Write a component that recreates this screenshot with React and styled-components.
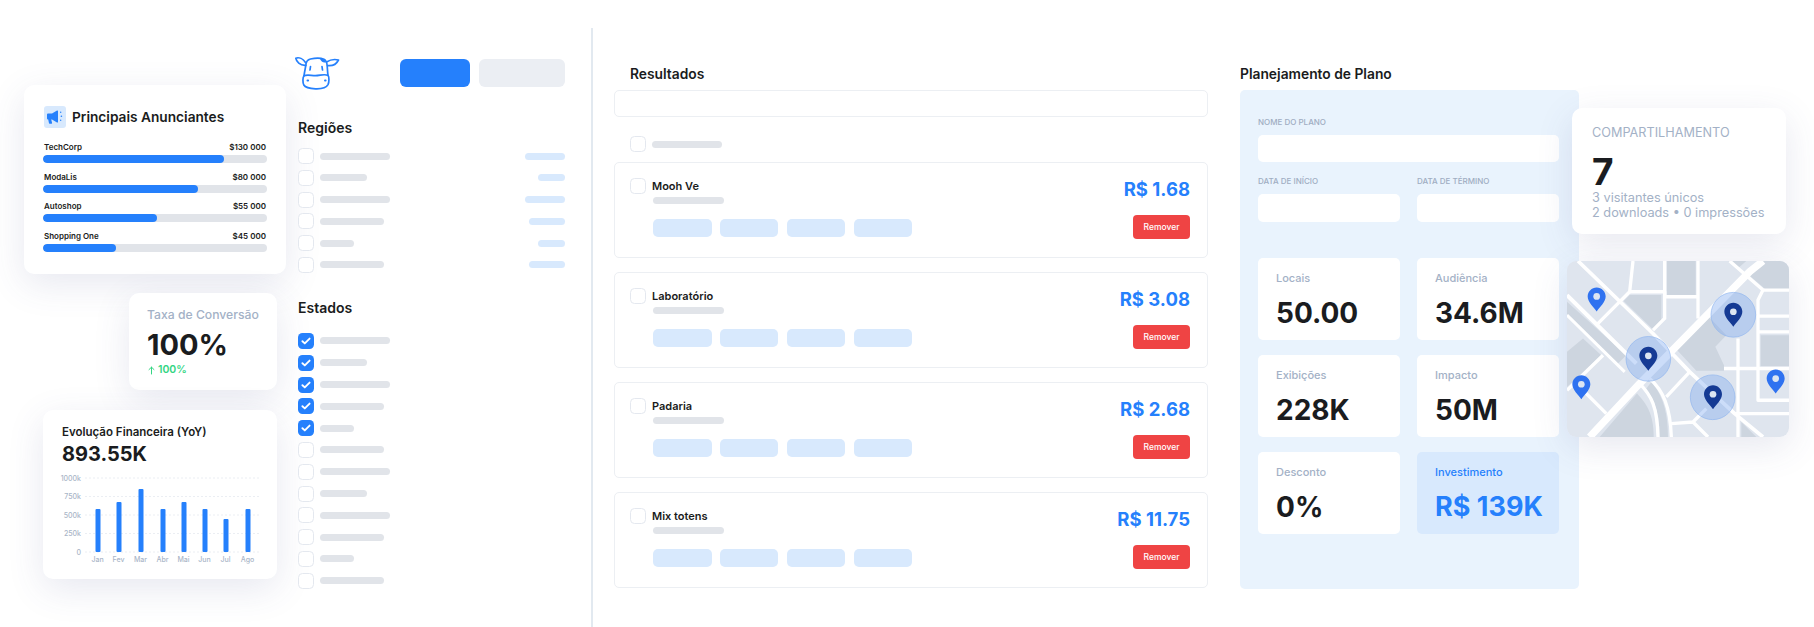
import React from "react";
import styled, { createGlobalStyle } from "styled-components";

const BLUE = "#2580FC";
const INK = "#1A1C20";
const MUTED = "#A3B1C6";
const BAR = "#E1E4E9";
const SOFT = "#D8E9FD";
const SHADOW = "0 10px 36px rgba(70, 80, 140, 0.13)";

const Global = createGlobalStyle`
  html, body { margin: 0; padding: 0; background: #fff; }
  body { font-family: Inter, "Liberation Sans", sans-serif; color: ${INK}; }
  * { box-sizing: border-box; }
`;

const Page = styled.div`
  display: flex;
  align-items: flex-start;
  width: 1814px;
  height: 627px;
  overflow: hidden;
  background: #fff;
`;

/* left: floating metric cards */
const LeftColumn = styled.div`
  display: flex;
  flex-direction: column;
  align-items: flex-end;
  width: 286px;
  padding-top: 85px;
  flex: none;
`;
const FloatCard = styled.section`
  background: #fff;
  border-radius: 10px;
  box-shadow: ${SHADOW};
`;
const AdvertisersCard = styled(FloatCard)`
  width: 262px;
  height: 189px;
  padding: 21px 19px 0 19px;
`;
const CardHead = styled.div`
  display: flex;
  align-items: center;
  gap: 6px;
  height: 22px;
  margin: 0 0 13px 1px;
`;
const IconBox = styled.span`
  display: flex;
  align-items: center;
  justify-content: center;
  width: 22px;
  height: 22px;
  border-radius: 3px;
  background: ${SOFT};
`;
const CardTitle = styled.h2`
  margin: 0;
  font-size: 13.7px;
  font-weight: 600;
  line-height: 20px;
  white-space: nowrap;
`;
const AdRow = styled.div`
  height: 29.5px;
`;
const AdLabels = styled.div`
  display: flex;
  justify-content: space-between;
  height: 12px;
  margin: 0 1px 2px 1px;
  font-size: 8px;
  font-weight: 600;
  line-height: 12px;
`;
const Track = styled.div`
  height: 8px;
  border-radius: 4px;
  background: ${BAR};
  overflow: hidden;
`;
const Fill = styled.div`
  height: 100%;
  border-radius: 4px;
  background: ${BLUE};
`;
const ConversionCard = styled(FloatCard)`
  width: 148px;
  height: 97px;
  margin: 19px 9px 0 0;
  padding: 14px 18px 0;
`;
const ConversionLabel = styled.div`
  font-size: 12.2px;
  font-weight: 500;
  line-height: 16px;
  color: ${MUTED};
  white-space: nowrap;
`;
const ConversionValue = styled.div`
  font-size: 29px;
  font-weight: 700;
  line-height: 38px;
  margin-top: 3px;
`;
const Trend = styled.div`
  display: flex;
  align-items: center;
  gap: 2px;
  font-size: 10.5px;
  font-weight: 600;
  line-height: 14px;
  margin-top: -1px;
  color: #34D583;
`;
const ChartCard = styled(FloatCard)`
  width: 234px;
  height: 169px;
  margin: 20px 9px 0 0;
  padding: 14px 0 0 19px;
`;
const ChartTitle = styled.div`
  font-size: 11.5px;
  font-weight: 600;
  line-height: 16px;
  white-space: nowrap;
`;
const ChartValue = styled.div`
  font-size: 20px;
  font-weight: 700;
  line-height: 28px;
`;
const ChartSvg = styled.svg`
  display: block;
  margin: 3px 0 0 -19px;
`;
const AxisText = styled.text`
  font-family: Inter, "Liberation Sans", sans-serif;
  font-size: 7px;
  fill: #A9B5C7;
  font-weight: 500;
`;

/* filters */
const FilterColumn = styled.aside`
  width: 267px;
  margin-left: 12px;
  padding-top: 55px;
  flex: none;
`;
const FilterTop = styled.div`
  display: flex;
  align-items: center;
  justify-content: space-between;
  height: 36px;
  margin-left: -3px;
`;
const TopButtons = styled.div`
  display: flex;
  gap: 9px;
`;
const TopButton = styled.div`
  width: ${(p) => p.$w}px;
  height: 28px;
  border-radius: 6px;
  background: ${(p) => (p.$primary ? BLUE : "#EBEEF3")};
`;
const SectionTitle = styled.h3`
  margin: ${(p) => p.$top}px 0 ${(p) => p.$bottom}px;
  font-size: 14px;
  font-weight: 600;
  line-height: 18px;
`;
const CheckList = styled.div`
  display: flex;
  flex-direction: column;
  gap: 5.8px;
`;
const CheckRow = styled.div`
  display: flex;
  align-items: center;
  gap: 6px;
  height: 16px;
`;
const Box = styled.span`
  display: flex;
  align-items: center;
  justify-content: center;
  flex: none;
  width: 16px;
  height: 16px;
  border-radius: 4.5px;
  background: ${(p) => (p.$checked ? BLUE : "#fff")};
  border: ${(p) => (p.$checked ? "none" : "1.5px solid #E4E8EF")};
`;
const Skeleton = styled.span`
  display: block;
  flex: none;
  width: ${(p) => p.$w}px;
  height: 7px;
  border-radius: 4px;
  background: ${BAR};
`;
const SkeletonBlue = styled(Skeleton)`
  margin-left: auto;
  background: ${SOFT};
`;

const Divider = styled.div`
  flex: none;
  width: 2px;
  height: 599px;
  margin: 28px 0 0 26px;
  background: #E2E9F0;
`;

/* results */
const ResultsColumn = styled.main`
  flex: none;
  width: 594px;
  margin-left: 21px;
  padding-top: 65px;
`;
const ColumnTitle = styled.h3`
  margin: 0 0 7px;
  padding-left: ${(p) => p.$pad || 0}px;
  font-size: 13.8px;
  font-weight: 600;
  line-height: 18px;
`;
const SearchBox = styled.div`
  height: 27px;
  border: 1px solid #ECEFF3;
  border-radius: 5px;
`;
const SelectAll = styled.div`
  display: flex;
  align-items: center;
  gap: 6px;
  height: 16px;
  margin: 19px 0 10px 16px;
`;
const ResultList = styled.div`
  display: flex;
  flex-direction: column;
  gap: 14px;
`;
const ResultCard = styled.article`
  display: flex;
  justify-content: space-between;
  height: 96px;
  padding: 15px 17px 0 15px;
  border: 1px solid #ECEFF3;
  border-radius: 5px;
`;
const ResultMain = styled.div`
  display: flex;
  flex-direction: column;
`;
const ResultName = styled.div`
  display: flex;
  align-items: center;
  gap: 6px;
  height: 16px;
  font-size: 11px;
  font-weight: 600;
`;
const ResultBar = styled(Skeleton)`
  margin: 3px 0 0 23px;
`;
const Chips = styled.div`
  display: flex;
  gap: 8.4px;
  margin: 15px 0 0 23px;
`;
const Chip = styled.span`
  width: 58.5px;
  height: 18px;
  border-radius: 5px;
  background: ${SOFT};
`;
const ResultSide = styled.div`
  display: flex;
  flex-direction: column;
  align-items: flex-end;
`;
const Price = styled.div`
  margin-top: -3px;
  font-size: 18.5px;
  font-weight: 700;
  line-height: 28px;
  color: ${BLUE};
  white-space: nowrap;
`;
const RemoveButton = styled.button`
  width: 57px;
  height: 24px;
  margin-top: 12px;
  padding: 0;
  border: none;
  border-radius: 4px;
  background: #EF4444;
  color: #fff;
  font-family: inherit;
  font-size: 8.5px;
  font-weight: 500;
`;

/* plan */
const PlanColumn = styled.section`
  position: relative;
  flex: none;
  width: 339px;
  margin-left: 32px;
  padding-top: 65px;
`;
const PlanPanel = styled.div`
  height: 499px;
  padding: 27px 20px 0 18px;
  border-radius: 5px;
  background: #E9F3FD;
`;
const FieldLabel = styled.div`
  height: 10px;
  margin-bottom: ${(p) => p.$gap}px;
  font-size: 8px;
  font-weight: 500;
  line-height: 10px;
  color: #9FADC2;
  white-space: nowrap;
`;
const Input = styled.div`
  height: ${(p) => p.$h}px;
  border-radius: 5px;
  background: #fff;
`;
const TwoCols = styled.div`
  display: grid;
  grid-template-columns: 142px 142px;
  column-gap: 17px;
  margin-top: 14px;
`;
const StatGrid = styled.div`
  display: grid;
  grid-template-columns: 142px 142px;
  gap: 15px 17px;
  margin-top: 36px;
`;
const Stat = styled.div`
  height: 82px;
  padding: 13px 0 0 18px;
  border-radius: 5px;
  background: ${(p) => (p.$accent ? SOFT : "#fff")};
`;
const StatLabel = styled.div`
  font-size: 11px;
  font-weight: 500;
  line-height: 14px;
  color: ${(p) => (p.$accent ? BLUE : MUTED)};
`;
const StatValue = styled.div`
  margin-top: 11px;
  font-size: ${(p) => (p.$accent ? 27 : 28)}px;
  font-weight: 700;
  line-height: 34px;
  color: ${(p) => (p.$accent ? BLUE : INK)};
  white-space: nowrap;
`;
const ShareCard = styled(FloatCard)`
  position: absolute;
  left: 332px;
  top: 108px;
  width: 214px;
  height: 126px;
  padding: 17px 0 0 20px;
`;
const ShareTitle = styled.div`
  font-size: 12.7px;
  font-weight: 400;
  line-height: 16px;
  color: ${MUTED};
`;
const ShareValue = styled.div`
  margin: 16px 0 3px;
  font-size: 37px;
  font-weight: 700;
  line-height: 30px;
`;
const ShareText = styled.div`
  font-size: 12.75px;
  line-height: 15px;
  color: ${MUTED};
  white-space: nowrap;
`;
const MapCard = styled.div`
  position: absolute;
  left: 327px;
  top: 261px;
  width: 222px;
  height: 176px;
  border-radius: 9px;
  overflow: hidden;
  box-shadow: ${SHADOW};
`;

/* data */
const advertisers = [
  ["TechCorp", "$130 000", 181],
  ["ModaLis", "$80 000", 155],
  ["Autoshop", "$55 000", 114],
  ["Shopping One", "$45 000", 73],
];
const regionRows = [
  [70, 40],
  [47, 27],
  [70, 40],
  [64, 36],
  [34, 27],
  [64, 36],
];
const stateRows = [70, 47, 70, 64, 34, 64, 70, 47, 70, 64, 34, 64];
const results = [
  ["Mooh Ve", "R$ 1.68"],
  ["Laboratório", "R$ 3.08"],
  ["Padaria", "R$ 2.68"],
  ["Mix totens", "R$ 11.75"],
];
const stats = [
  ["Locais", "50.00"],
  ["Audiência", "34.6M"],
  ["Exibições", "228K"],
  ["Impacto", "50M"],
  ["Desconto", "0%"],
  ["Investimento", "R$ 139K", true],
];
const bars = [
  ["Jan", 98, 509],
  ["Fev", 119, 502],
  ["Mar", 141, 489],
  ["Abr", 163, 509],
  ["Mai", 184, 502],
  ["Jun", 205, 509],
  ["Jul", 226, 519],
  ["Ago", 248, 509],
];
const gridLines = [
  ["1000k", 478],
  ["750k", 496.5],
  ["500k", 515],
  ["250k", 533.5],
  ["0", 552],
];

/* drawings */
const CowLogo = () => (
  <svg width="46" height="36" viewBox="0 0 46 36" fill="none" stroke={BLUE} strokeWidth="1.7" strokeLinecap="round" strokeLinejoin="round">
    <path d="M10.5 7.5C8 3.8 4 2 .8 3.2 1.4 7 5 10.2 10 10.4" />
    <path d="M31.5 7C35 4.8 39.5 4 43.5 5 41.5 9 37.5 11.2 32.6 10.6" />
    <path d="M10.8 10.5C11 7 12.5 4.6 15.5 4 20 3 26 3 29 4.2 31.2 5.2 32 8 32.2 11 32.5 15 32.6 18 33 20.4" />
    <path d="M10.8 10.5C10.2 14 9.4 17.5 9 20.8" />
    <path d="M9 20.8C12 19.2 16 20.6 20.5 20.6 25 20.6 29.5 18.6 33 20.4 34.3 21.4 34.2 27 33 29.6 31 33.2 26 34 20.5 33.8 15 33.6 10.5 33 8.8 30 7.6 27.5 7.6 22.5 9 20.8Z" />
    <path d="M15.5 11.5L15 15M27 11.5L27.5 15" />
    <path d="M12.5 25.5h.6M30 25.5h.6" strokeWidth="2" />
    <path d="M25 4C27 3.4 30 4.4 31 7 29.4 8.2 26.6 7.4 25 4Z" fill={BLUE} stroke="none" />
  </svg>
);

const Megaphone = () => (
  <svg width="18" height="16" viewBox="0 0 18 16" fill={BLUE}>
    <path d="M1 5.4a1 1 0 0 1 1-1h4L11 1.6c.5-.3 1-.1 1 .5v10.8c0 .6-.5.8-1 .5L6 10.6H5.2l.9 3.4c.1.4-.2.8-.6.8H3.6c-.3 0-.6-.2-.6-.5L2.2 10.6H2a1 1 0 0 1-1-1Z" />
    <rect x="14" y="2.6" width="1.4" height="1.4" rx=".7" />
    <rect x="14.6" y="6.6" width="1.6" height="1.4" rx=".7" />
    <rect x="14" y="10.6" width="1.4" height="1.4" rx=".7" />
  </svg>
);

const CheckMark = () => (
  <svg width="10" height="8" viewBox="0 0 10 8" fill="none" stroke="#fff" strokeWidth="1.9" strokeLinecap="round" strokeLinejoin="round">
    <path d="M1.4 4.2 3.8 6.4 8.6 1.6" />
  </svg>
);

const ArrowUp = () => (
  <svg width="9" height="9" viewBox="0 0 9 9" fill="none" stroke="#34D583" strokeWidth="1" strokeLinecap="round" strokeLinejoin="round">
    <path d="M4.5 8V1.2M2 3.6l2.5-2.4L7 3.6" />
  </svg>
);

const FinanceChart = () => (
  <ChartSvg width="234" height="108" viewBox="43 471 234 108">
    {gridLines.map(([label, y]) => (
      <g key={label}>
        <line x1="85" x2="259" y1={y} y2={y} stroke="#E6EAF0" strokeWidth="0.8" strokeDasharray="2 2" />
        <AxisText x="81" y={y + 2.5} textAnchor="end">{label}</AxisText>
      </g>
    ))}
    {bars.map(([label, x, top]) => (
      <g key={label}>
        <rect x={x - 2.5} y={top} width="5" height={552 - top} rx="1" fill={BLUE} />
        <AxisText x={x - 0.5} y="562" textAnchor="middle">{label}</AxisText>
      </g>
    ))}
  </ChartSvg>
);

const pinPath = "M0 -27C-15 -27 -27 -15 -27 0C-27 16 -9 32 0 45C9 32 27 16 27 0C27 -15 15 -27 0 -27Z";
const Pin = ({ x, y, color }) => (
  <g transform={`translate(${x} ${y})`}>
    <path d={pinPath} fill={color} />
    <circle r="10" fill="#DCE5F2" />
  </g>
);
const Halo = ({ x, y }) => (
  <circle cx={x} cy={y} r="67" fill="rgba(120,165,240,0.38)" stroke="#8FB5EE" strokeWidth="2" />
);

const Road = ({ d, w = 10 }) => <path d={d} fill="none" stroke="#fff" strokeWidth={w} strokeLinejoin="round" />;

const CityMap = () => (
  <svg width="222" height="176" viewBox="52 63 666 527" preserveAspectRatio="none" style={{ display: "block" }}>
    <rect x="52" y="63" width="666" height="527" fill="#DFE5EE" />
    <g fill="#CDD5DF">
      <path d="M352 63H438V165H352Z" />
      <path d="M597 105L640 63H718V150H650Z" />
      <path d="M222 183L240 165H335V240L310 268Z" />
      <path d="M375 322L472 225L530 285L497 320L523 375V392H440Z" />
      <path d="M52 185V225L205 370L230 345Z" />
      <path d="M52 335L100 295L155 345L52 440Z" />
      <path d="M150 590L262 460C290 490 312 520 312 590Z" />
      <path d="M633 285H718V378H633Z" />
      <path d="M575 545L620 590H575Z" />
      <path d="M330 590C330 530 320 490 290 445L305 425C345 470 355 530 355 590Z" />
      <path d="M540 63H590L565 85Z" />
    </g>
    <Road d="M85 63L310 280L420 395L555 520L640 590" w={11} />
    <Road d="M120 590L270 430L600 95L640 63" w={22} />
    <Road d="M140 255L240 155L250 63" />
    <Road d="M240 155H345V235L310 270M345 170H445" />
    <Road d="M345 63V170M445 63V235" />
    <Road d="M540 63L640 150H718M640 150L625 180V480H718" />
    <Road d="M625 228H718M625 275H718" />
    <Road d="M565 295V590M523 385H718M555 520H718" />
    <Road d="M52 165L260 370" w={12} />
    <Road d="M52 225L225 395" w={9} />
    <Road d="M52 450L160 345M100 450L170 520" />
    <Road d="M270 430C305 465 323 500 325 590" w={10} />
    <Road d="M300 415C340 450 362 500 365 590" w={10} />
    <Road d="M350 470L420 395M365 550L430 545L475 590M430 545L470 505" />
    <Halo x={296} y={356} />
    <Halo x={551} y={224} />
    <Halo x={489} y={471} />
    <Pin x={141} y={169} color="#2F72F0" />
    <Pin x={95} y={432} color="#2F72F0" />
    <Pin x={678} y={415} color="#2F72F0" />
    <Pin x={296} y={347} color="#153A94" />
    <Pin x={551} y={215} color="#153A94" />
    <Pin x={490} y={462} color="#153A94" />
  </svg>
);

export default function App() {
  return (
    <Page>
      <Global />
      <LeftColumn>
        <AdvertisersCard>
          <CardHead>
            <IconBox><Megaphone /></IconBox>
            <CardTitle>Principais Anunciantes</CardTitle>
          </CardHead>
          {advertisers.map(([name, amount, width]) => (
            <AdRow key={name}>
              <AdLabels><span>{name}</span><span>{amount}</span></AdLabels>
              <Track><Fill style={{ width }} /></Track>
            </AdRow>
          ))}
        </AdvertisersCard>
        <ConversionCard>
          <ConversionLabel>Taxa de Conversão</ConversionLabel>
          <ConversionValue>100%</ConversionValue>
          <Trend><ArrowUp />100%</Trend>
        </ConversionCard>
        <ChartCard>
          <ChartTitle>Evolução Financeira (YoY)</ChartTitle>
          <ChartValue>893.55K</ChartValue>
          <FinanceChart />
        </ChartCard>
      </LeftColumn>

      <FilterColumn>
        <FilterTop>
          <CowLogo />
          <TopButtons>
            <TopButton $primary $w={70} />
            <TopButton $w={86} />
          </TopButtons>
        </FilterTop>
        <SectionTitle $top={28} $bottom={11}>Regiões</SectionTitle>
        <CheckList>
          {regionRows.map(([a, b], i) => (
            <CheckRow key={i}>
              <Box />
              <Skeleton $w={a} />
              <SkeletonBlue $w={b} />
            </CheckRow>
          ))}
        </CheckList>
        <SectionTitle $top={26} $bottom={16}>Estados</SectionTitle>
        <CheckList>
          {stateRows.map((w, i) => (
            <CheckRow key={i}>
              <Box $checked={i < 5}>{i < 5 && <CheckMark />}</Box>
              <Skeleton $w={w} />
            </CheckRow>
          ))}
        </CheckList>
      </FilterColumn>

      <Divider />

      <ResultsColumn>
        <ColumnTitle $pad={16}>Resultados</ColumnTitle>
        <SearchBox />
        <SelectAll>
          <Box />
          <Skeleton $w={70} />
        </SelectAll>
        <ResultList>
          {results.map(([name, price]) => (
            <ResultCard key={name}>
              <ResultMain>
                <ResultName><Box />{name}</ResultName>
                <ResultBar $w={71} />
                <Chips><Chip /><Chip /><Chip /><Chip /></Chips>
              </ResultMain>
              <ResultSide>
                <Price>{price}</Price>
                <RemoveButton>Remover</RemoveButton>
              </ResultSide>
            </ResultCard>
          ))}
        </ResultList>
      </ResultsColumn>

      <PlanColumn>
        <ColumnTitle>Planejamento de Plano</ColumnTitle>
        <PlanPanel>
          <FieldLabel $gap={8}>NOME DO PLANO</FieldLabel>
          <Input $h={27} />
          <TwoCols>
            <div>
              <FieldLabel $gap={8}>DATA DE INÍCIO</FieldLabel>
              <Input $h={28} />
            </div>
            <div>
              <FieldLabel $gap={8}>DATA DE TÉRMINO</FieldLabel>
              <Input $h={28} />
            </div>
          </TwoCols>
          <StatGrid>
            {stats.map(([label, value, accent]) => (
              <Stat key={label} $accent={accent}>
                <StatLabel $accent={accent}>{label}</StatLabel>
                <StatValue $accent={accent}>{value}</StatValue>
              </Stat>
            ))}
          </StatGrid>
        </PlanPanel>
        <ShareCard>
          <ShareTitle>COMPARTILHAMENTO</ShareTitle>
          <ShareValue>7</ShareValue>
          <ShareText>3 visitantes únicos</ShareText>
          <ShareText>2 downloads • 0 impressões</ShareText>
        </ShareCard>
        <MapCard><CityMap /></MapCard>
      </PlanColumn>
    </Page>
  );
}
